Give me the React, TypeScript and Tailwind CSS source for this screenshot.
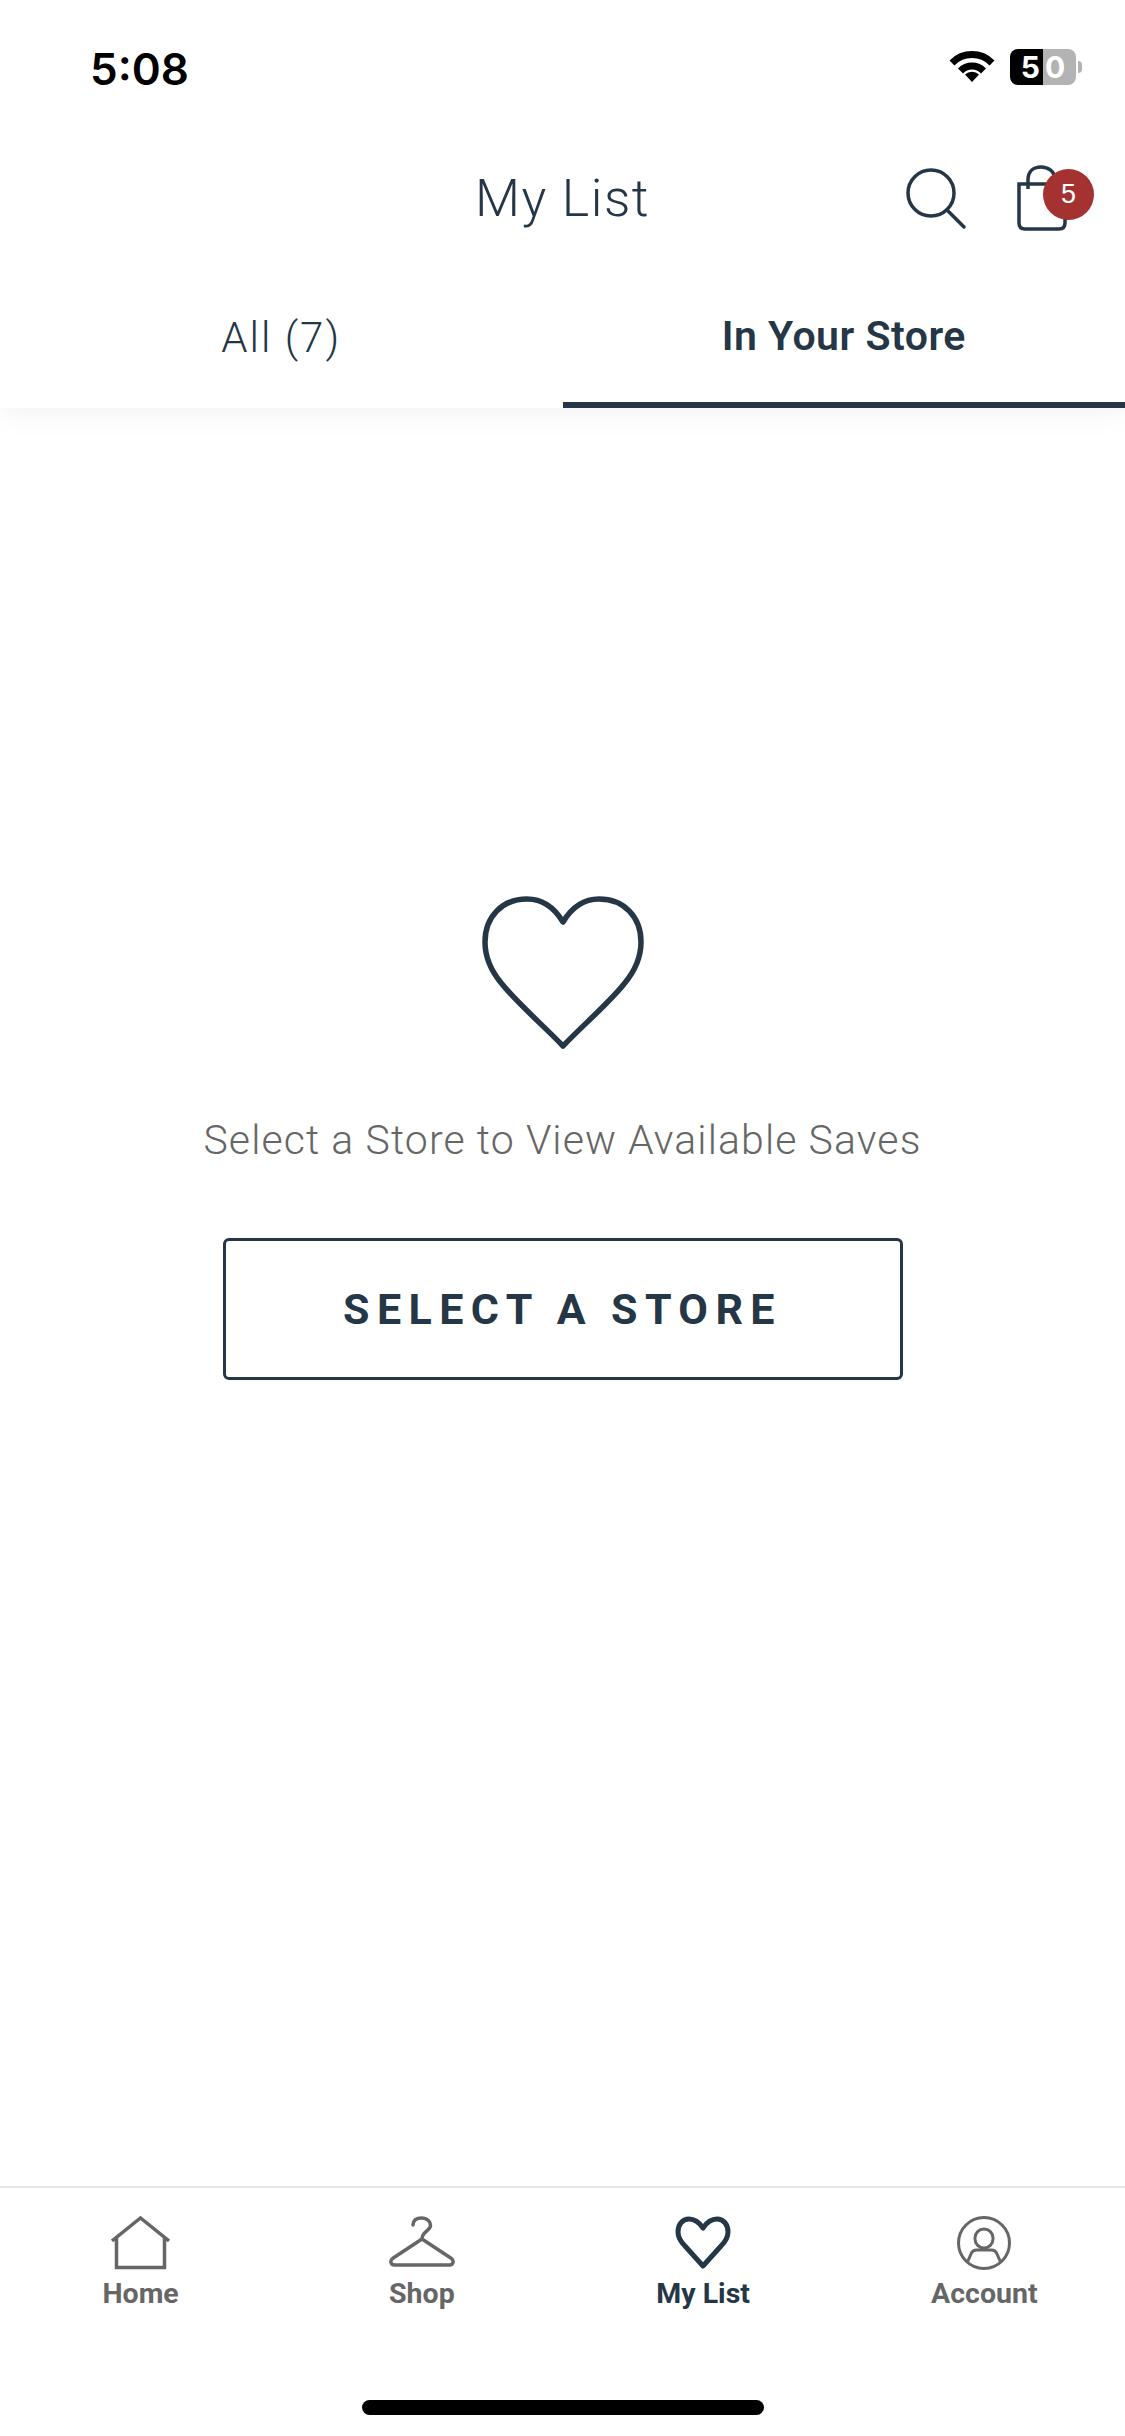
const navy = '#253746'
const gray = '#666666'

const HomeIcon = () => (
	<svg width={59} height={54} viewBox="0 0 59 54" fill="none" stroke={gray} strokeWidth={3.5}>
		<path d="M1 25 L29.5 2 L58 25" />
		<path d="M5.5 22 V51.5 H53.5 V22" />
	</svg>
)

const HangerIcon = () => (
	<svg width={66} height={54} viewBox="0 0 66 54" fill="none" stroke={gray} strokeWidth={3.5} strokeLinecap="round" strokeLinejoin="round">
		<path d="M24 9 C24 4 28 2 33 2 C38 2 41.5 5.5 41.5 9.5 C41.5 15 33 15 33 23 L3.5 42.5 C0.5 45 2 49 5.5 49 L60.5 49 C64 49 65.5 45 62.5 42.5 L33 23" />
	</svg>
)

const NavHeart = () => (
	<svg width={56} height={54} viewBox="0 0 56 54" fill="none" stroke={navy} strokeWidth={5} strokeLinejoin="round">
		<path d="M28 12 C24 6 19 3 14 3 C7 3 3 9 3 16 C3 22 6 26 10 30 L28 50 L46 30 C50 26 53 22 53 16 C53 9 49 3 42 3 C37 3 32 6 28 12 Z" />
	</svg>
)

const AccountIcon = () => (
	<svg width={56} height={54} viewBox="0 0 56 54" fill="none" stroke={gray} strokeWidth={3}>
		<circle cx={28} cy={27} r={25.5} />
		<rect x={19} y={13} width={18} height={19} rx={9} />
		<path d="M11 47 L15 38 C16 35 18 34 21 34 H35 C38 34 40 35 41 38 L45 47" />
	</svg>
)

const tabs = [
	{ label: 'Home', icon: <HomeIcon />, active: false },
	{ label: 'Shop', icon: <HangerIcon />, active: false },
	{ label: 'My List', icon: <NavHeart />, active: true },
	{ label: 'Account', icon: <AccountIcon />, active: false },
]

const App = () => {
	return (
		<div className="flex h-[2436px] w-[1125px] flex-col overflow-hidden bg-white font-['Roboto',sans-serif]">
			<header className="bg-white shadow-[0_6px_28px_rgba(0,0,0,0.05)]">
				{/* status bar */}
				<div className="flex h-[134px] items-start justify-between pl-[90px] pr-[43px] pt-[41px]">
					<span className="font-['Inter',sans-serif] text-[44px] font-semibold leading-[56px] text-black">
						5:08
					</span>
					<div className="mt-[8px] flex items-center gap-[14px]">
						<svg width={48} height={32} viewBox="0 0 46 32" fill="none" stroke="#000">
							<path d="M3 12 A28 28 0 0 1 43 12" strokeWidth={7} />
							<path d="M11.5 20 A16 16 0 0 1 34.5 20" strokeWidth={7} />
							<path d="M23 31 L16 23.5 A10 10 0 0 1 30 23.5 Z" fill="#000" stroke="none" />
						</svg>
						<div className="flex items-center gap-[2px]">
							<div className="flex h-[36px] w-[66px] font-['Inter',sans-serif] text-[30px] font-bold leading-[36px] text-white">
								<span className="flex w-[33px] justify-end rounded-l-[8px] bg-black pr-[3px]">5</span>
								<span className="flex w-[33px] justify-start rounded-r-[8px] bg-[#b3b3b3] pl-[2px]">0</span>
							</div>
							<div className="h-[12px] w-[4px] rounded-r-full bg-[#b3b3b3]" />
						</div>
					</div>
				</div>

				{/* title row */}
				<div className="grid h-[130px] grid-cols-[1fr_auto_1fr] items-center">
					<div />
					<h1 className="text-[52px] font-light leading-[114px] tracking-[1.5px] text-[#253746]">
						My List
					</h1>
					<div className="flex items-center justify-end pr-[29px]">
						<svg width={62} height={64} viewBox="0 0 62 64" fill="none" stroke={navy} strokeWidth={3.5} strokeLinecap="round">
							<circle cx={26} cy={26} r={23} />
							<path d="M42 43 L59 60" />
						</svg>
						<div className="relative ml-[50px] mr-[29px] h-[68px] w-[50px]">
							<svg width={50} height={66} viewBox="0 0 50 66" fill="none" stroke={navy} strokeWidth={3.5}>
								<path d="M2 19 H48 V58 C48 62 46 64 42 64 H8 C4 64 2 62 2 58 Z" />
								<path d="M11 24 V15 C11 6 17 2 24 2 C31 2 38 6 38 15" />
							</svg>
							<span className="absolute left-[26px] top-[4px] flex h-[51px] w-[51px] items-center justify-center rounded-full bg-[#a33230] font-['Liberation_Sans',sans-serif] text-[27px] text-white">
								5
							</span>
						</div>
					</div>
				</div>

				{/* tabs */}
				<div className="grid h-[144px] grid-cols-2">
					<div className="flex items-center justify-center pb-[6px] pt-[8px] text-[42px] font-light tracking-[2px] text-[#253746]">
						All (7)
					</div>
					<div className="flex items-center justify-center border-b-[6px] border-[#253746] pt-[8px] text-[41px] font-semibold tracking-[0.5px] text-[#253746]">
						In Your Store
					</div>
				</div>
			</header>

			{/* empty state */}
			<main className="flex flex-1 flex-col items-center pt-[488px]">
				<svg width={162} height={154} viewBox="0 0 162 154" fill="none" stroke={navy} strokeWidth={5.5} strokeLinejoin="round">
					<path d="M81 26 C72 11 59 3 45 3 C20 3 3 21 3 46 C3 62 9 75 20 88 C36 108 62 130 81 150 C100 130 126 108 142 88 C153 75 159 62 159 46 C159 21 142 3 117 3 C103 3 90 11 81 26 Z" />
				</svg>
				<p className="mt-[60px] text-[41px] font-light leading-[60px] tracking-[1.1px] text-[#666666]">
					Select a Store to View Available Saves
				</p>
				<button className="mt-[68px] flex h-[142px] w-[680px] items-center justify-center rounded-[6px] border-[3px] border-[#253746] text-[43px] font-bold tracking-[7.4px] text-[#253746]">
					SELECT A STORE
				</button>
			</main>

			{/* bottom nav */}
			<nav className="h-[250px] border-t-2 border-[#e6e6e6] bg-white">
				<div className="grid grid-cols-4 pt-[28px]">
					{tabs.map((tab) => (
						<div key={tab.label} className="flex flex-col items-center">
							{tab.icon}
							<span className={`mt-[4px] text-[28.5px] font-bold leading-[40px] ${tab.active ? 'text-[#253746]' : 'text-[#666666]'}`}>
								{tab.label}
							</span>
						</div>
					))}
				</div>
				<div className="mx-auto mt-[86px] h-[15px] w-[402px] rounded-full bg-black" />
			</nav>
		</div>
	)
}

export default App
